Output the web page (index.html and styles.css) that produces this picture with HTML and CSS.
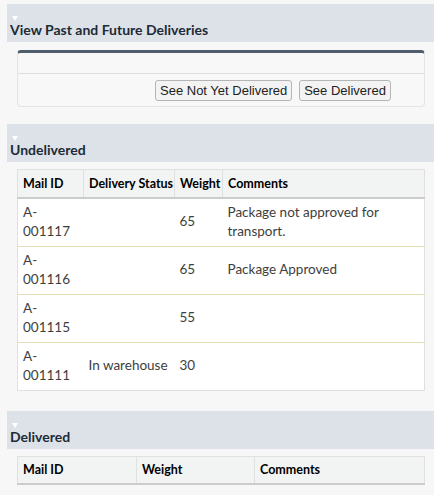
FILE: index.html
```html
<!DOCTYPE html>
<html>
<head>
<meta charset="utf-8">
<link rel="stylesheet" href="styles.css">
</head>
<body>
<div class="page">
  <div class="section-head first">
    <span class="twisty"></span>
    <h3>View Past and Future Deliveries</h3>
  </div>
  <div class="section-body">
    <div class="block">
      <div class="block-top"></div>
      <div class="block-buttons">
        <button class="btn">See Not Yet Delivered</button>
        <button class="btn">See Delivered</button>
      </div>
    </div>
  </div>

  <div class="section-head after-block">
    <span class="twisty"></span>
    <h3>Undelivered</h3>
  </div>
  <div class="section-body">
    <table class="list list-undelivered">
      <colgroup>
        <col class="c-id"><col class="c-status"><col class="c-weight"><col>
      </colgroup>
      <thead>
        <tr><th>Mail ID</th><th>Delivery Status</th><th>Weight</th><th>Comments</th></tr>
      </thead>
      <tbody>
        <tr><td>A-<br>001117</td><td></td><td>65</td><td>Package not approved for transport.</td></tr>
        <tr><td>A-<br>001116</td><td></td><td>65</td><td>Package Approved</td></tr>
        <tr><td>A-<br>001115</td><td></td><td>55</td><td></td></tr>
        <tr class="last"><td>A-<br>001111</td><td>In warehouse</td><td>30</td><td></td></tr>
      </tbody>
    </table>
  </div>

  <div class="section-head">
    <span class="twisty"></span>
    <h3>Delivered</h3>
  </div>
  <div class="section-body">
    <table class="list list-delivered">
      <colgroup>
        <col class="d-id"><col class="d-weight"><col>
      </colgroup>
      <thead>
        <tr><th>Mail ID</th><th>Weight</th><th>Comments</th></tr>
      </thead>
    </table>
  </div>
</div>
</body>
</html>
```
FILE: styles.css
```css
html, body {
  margin: 0;
  padding: 0;
  background: #f7f7f7;
}
body {
  font-family: Lato, "Open Sans", sans-serif;
  font-size: 13.5px;
  color: #3e3e3c;
}
.page {
  padding: 4px 0 0 7px;
}
.section-head {
  background: #dce2e8;
  height: 38px;
  box-sizing: border-box;
  padding: 12px 0 0 3px;
  margin-top: 20px;
}
.section-head.first {
  margin-top: 0;
}
.section-head.after-block {
  margin-top: 17px;
}
.twisty {
  display: block;
  width: 0;
  height: 0;
  margin-left: 2px;
  border-left: 3.5px solid transparent;
  border-right: 3.5px solid transparent;
  border-top: 5px solid #ffffff;
}
.section-head h3 {
  margin: 0;
  font-size: 14px;
  font-weight: 700;
  color: #1e2a36;
  line-height: 17px;
}
.section-body {
  padding: 7px 9px 0 10px;
}
.block {
  background: #f8f8f8;
  border: 1px solid #e4e4e4;
  border-top: 3px solid #4f5e6d;
  border-radius: 4px;
  height: 57px;
  box-sizing: border-box;
  margin-top: 1px;
}
.block-top {
  height: 20px;
  border-bottom: 1px solid #dddddd;
}
.block-buttons {
  display: flex;
  gap: 7px;
  padding: 6px 0 0 137px;
}
.btn {
  font-family: "Liberation Sans", Arial, sans-serif;
  font-size: 13px;
  color: #222222;
  background: #f3f3f3;
  border: 1px solid #b5b5b5;
  border-radius: 3px;
  height: 21px;
  padding: 0 4px;
  line-height: 19px;
}
.list {
  width: 100%;
  table-layout: fixed;
  border-collapse: collapse;
  background: #ffffff;
  border: 1px solid #e0e0e0;
}
.list th {
  background: #f2f3f3;
  text-align: left;
  font-size: 12.5px;
  font-weight: 700;
  color: #000000;
  height: 28px;
  box-sizing: border-box;
  padding: 0 5px;
  white-space: nowrap;
  border: 1px solid #e0e0e0;
  border-bottom: 2px solid #cccccc;
}
.list td {
  padding: 4px 5px;
  border-bottom: 1px solid #e3deb8;
  vertical-align: middle;
  line-height: 19.5px;
  color: #3e3e3c;
}
.list tr.last td {
  border-bottom: 1px solid #e0e0e0;
}
.c-id { width: 66px; }
.c-status { width: 91px; }
.c-weight { width: 48px; }
.d-id { width: 119px; }
.d-weight { width: 118px; }
```
